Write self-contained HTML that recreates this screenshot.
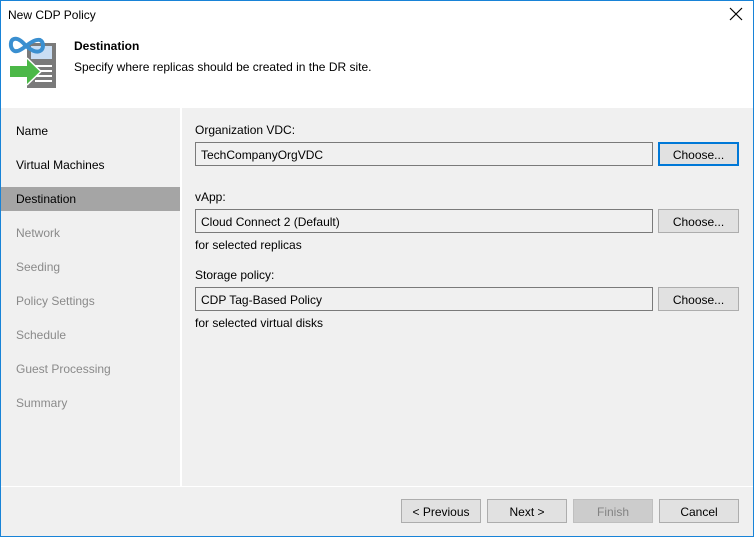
<!DOCTYPE html>
<html><head><style>
*{margin:0;padding:0;box-sizing:border-box}
body{width:754px;height:537px;overflow:hidden;font-family:"Liberation Sans",sans-serif;font-size:12px;color:#000;background:#f0f0f0;position:relative}
.frame{position:absolute;left:0;top:0;width:754px;height:537px;border:1px solid #1883d7;z-index:5;pointer-events:none}
.abs{position:absolute}
.title{left:0;top:0;width:754px;height:108px;background:#fff}
.nav{left:0;top:108px;width:180px;height:378px;background:#f0f0f0}
.vsep{left:180px;top:108px;width:2px;height:378px;background:#fff}
.hsep{left:0;top:486px;width:754px;height:1px;background:#fff}
.ni{position:absolute;left:16px;font-size:12px;color:#000}
.dis{color:#8a8a8a}
.sel{left:0;top:187px;width:180px;height:24px;background:#a5a5a5}
.tb{position:absolute;left:195px;width:458px;height:24px;border:1px solid #7a7a7a;background:#f0f0f0;padding:5px 0 0 5px}
.btn{position:absolute;height:24px;border:1px solid #adadad;background:#e1e1e1;text-align:center;padding-top:5px}
.lbl{position:absolute;left:195px}
</style></head><body>
<div class="frame"></div>
<div class="abs title"></div>
<div class="abs" style="left:8px;top:8px;">New CDP Policy</div>
<svg class="abs" style="left:729px;top:7px" width="14" height="14" viewBox="0 0 14 14"><path d="M1 1L13 13M13 1L1 13" stroke="#000" stroke-width="1.2"/></svg>
<svg class="abs" style="left:0;top:0" width="70" height="100" viewBox="0 0 70 100">
<rect x="27" y="43" width="29" height="45" fill="#7a7a7a"/>
<rect x="31" y="46" width="21" height="13" fill="#c9ddf3"/>
<rect x="35" y="65" width="17" height="2" fill="#fff"/><rect x="35" y="70" width="17" height="2" fill="#fff"/><rect x="35" y="75" width="17" height="2" fill="#fff"/><rect x="35" y="80" width="17" height="2" fill="#fff"/>
<path d="M26 46 C21 40 17 38 14 39 C10 40 10 47 13 50 C16 53 21 50 26 46 C31 42 36 39 40 40 C44 42 44 49 40 51 C36 53 31 50 26 46Z" fill="none" stroke="#3a8fd0" stroke-width="4"/>
<path d="M10 66 L27 66 L27 58 L41 71.5 L27 85 L27 77 L10 77 Z" fill="#4cb848"/>
<path d="M27 58 L41 71.5 L27 85" fill="none" stroke="#fff" stroke-width="1.5"/>
</svg>
<div class="abs" style="left:74px;top:39px;font-weight:bold;">Destination</div>
<div class="abs" style="left:74px;top:60px;">Specify where replicas should be created in the DR site.</div>
<div class="abs nav"></div>
<div class="abs sel"></div>
<div class="abs vsep"></div>
<div class="abs hsep"></div>
<div class="ni" style="top:124px">Name</div>
<div class="ni" style="top:158px">Virtual Machines</div>
<div class="ni" style="top:192px">Destination</div>
<div class="ni dis" style="top:226px">Network</div>
<div class="ni dis" style="top:260px">Seeding</div>
<div class="ni dis" style="top:294px">Policy Settings</div>
<div class="ni dis" style="top:328px">Schedule</div>
<div class="ni dis" style="top:362px">Guest Processing</div>
<div class="ni dis" style="top:396px">Summary</div>
<div class="lbl" style="top:123px">Organization VDC:</div>
<div class="tb" style="top:142px">TechCompanyOrgVDC</div>
<div class="btn" style="left:658px;top:142px;width:81px;border:2px solid #0078d7;padding-top:4px">Choose...</div>
<div class="lbl" style="top:190px">vApp:</div>
<div class="tb" style="top:209px">Cloud Connect 2 (Default)</div>
<div class="btn" style="left:658px;top:209px;width:81px">Choose...</div>
<div class="lbl" style="top:238px">for selected replicas</div>
<div class="lbl" style="top:268px">Storage policy:</div>
<div class="tb" style="top:287px">CDP Tag-Based Policy</div>
<div class="btn" style="left:658px;top:287px;width:81px">Choose...</div>
<div class="lbl" style="top:316px">for selected virtual disks</div>
<div class="btn" style="left:401px;top:499px;width:80px">&lt; Previous</div>
<div class="btn" style="left:487px;top:499px;width:80px">Next &gt;</div>
<div class="btn" style="left:573px;top:499px;width:80px;background:#cccccc;border-color:#bfbfbf;color:#838383">Finish</div>
<div class="btn" style="left:659px;top:499px;width:80px">Cancel</div>
</body></html>
